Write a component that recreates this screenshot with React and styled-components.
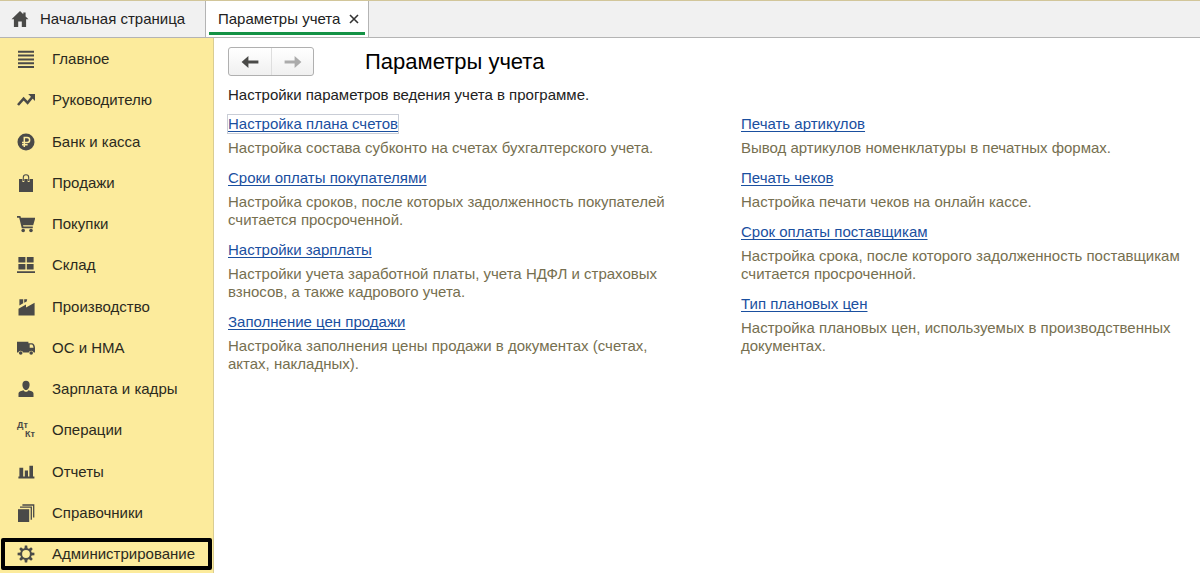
import styled, {createGlobalStyle} from "styled-components";

const GlobalStyle = createGlobalStyle`
    * {
        box-sizing: border-box;
    }

    body {
        margin: 0;
        background: #FFF;
        font-family: "Liberation Sans", Arial, sans-serif;
        font-size: 15px;
        line-height: 18px;
        color: #222;
    }
`;

const HomeIcon = () => (
    <Icon viewBox="0 0 18 18">
        <path d="M9 1 0.5 9.3h2.4V17h4.3v-5.4h3.6V17h4.3V9.3h2.4L14.6 6.6V2.5h-2.3v1.8z"/>
    </Icon>
);

const MenuIcon = () => (
    <Icon viewBox="0 0 18 18">
        <path d="M1 .8h16v2H1zM1 4.6h16v2H1zM1 8.4h16v2H1zM1 12.2h16v2H1zM1 16h16v2H1z"/>
    </Icon>
);

const TrendIcon = () => (
    <Icon viewBox="0 0 18 18">
        <path d="M1 14 6.6 7.6l4 4.2L15.4 6" fill="none" stroke="currentColor" strokeWidth="2.6"/>
        <path d="M11.2 3H18v7z"/>
    </Icon>
);

const RubleIcon = () => (
    <Icon viewBox="0 0 18 18">
        <circle cx="9" cy="9" r="8.5"/>
        <path
            d="M7.3 14V4.6h2.9a2.4 2.4 0 0 1 0 4.9H5M5 11.8h5.6"
            fill="none" stroke="#FCEB9C" strokeWidth="1.5"
        />
    </Icon>
);

const BagIcon = () => (
    <Icon viewBox="0 0 18 18">
        <path d="M2 5h3.4v3h1.9V5h3.4v3h1.9V5H16v13H2z"/>
        <path d="M6.3 7V3.4a2.7 2.7 0 0 1 5.4 0V7" fill="none" stroke="currentColor" strokeWidth="1.1"/>
    </Icon>
);

const CartIcon = () => (
    <Icon viewBox="0 0 18 18">
        <path d="M0 1h3.4l.5 1.7H18.400l-2.2 7.5H6l.4 1.4h9.400v1.6H4.8L2.2 2.7H0z"/>
        <circle cx="6.2" cy="15.500" r="1.800"/>
        <circle cx="14" cy="15.500" r="1.800"/>
    </Icon>
);

const WarehouseIcon = () => (
    <Icon viewBox="0 0 18 18">
        <path d="M1.4 1h7v5.6h-7zM9.8 1h6.8v5.6H9.8zM1.4 8h7v5.5h-7zM9.8 8h6.8v5.5H9.8zM0 15.2h18V17H0z"/>
    </Icon>
);

const FactoryIcon = () => (
    <Icon viewBox="0 0 18 18">
        <path d="M1.5 17.400V10.8L9 6.400v3.100L17.6 4.800v12.600z"/>
        <path d="M2.400 1.200h3.800v4L2.400 7.400zM7.200 1.200h3l-.5 2.400L7.200 4.800z"/>
    </Icon>
);

const TruckIcon = () => (
    <Icon viewBox="0 0 18 18">
        <path
            fillRule="evenodd"
            d="M0 2.8h11.4v1.4h3.8c1.6 0 2.8 2.6 2.8 4.6v4.8h-1.3a2.6 2.6 0 0 0-5 0H6.2a2.6 2.6 0 0 0-5 0H0zM12.7 5.6v3.1h3.8c-.2-1.7-.8-3.1-1.7-3.1z"
        />
        <circle cx="3.7" cy="14" r="1.8"/>
        <circle cx="14.2" cy="14" r="1.8"/>
    </Icon>
);

const PersonIcon = () => (
    <Icon viewBox="0 0 18 18">
        <path d="M9 .8c2.300 0 3.600 1.600 3.600 3.900S11.200 10 9 10 5.400 7 5.400 4.700 6.700.8 9 .8z"/>
        <path d="M6.600 10.200C7.200 11.200 8 11.700 9 11.700s1.800-.5 2.400-1.500l3.200 1c1.300.4 1.900 1.300 1.900 2.600V17h-15v-3.200c0-1.300.6-2.200 1.900-2.600z"/>
    </Icon>
);

const ChartIcon = () => (
    <Icon viewBox="0 0 18 18">
        <path d="M2.4 4.8h3.8v9.2H2.4zM7.8 7.6h3.2v6.4H7.8zM12.4 2.8H16v11.2h-3.6zM1.4 13.6h16v1.8h-16z"/>
    </Icon>
);

const BooksIcon = () => (
    <Icon viewBox="0 0 18 18">
        <path d="M1 5.2h11.2V18H1z"/>
        <path d="M3 3.2h11.3v12.6M5.4 1h11.3v12.6" fill="none" stroke="currentColor" strokeWidth="1.3"/>
    </Icon>
);

const teeth = [0, 45, 90, 135, 180, 225, 270, 315];

const GearIcon = () => (
    <Icon viewBox="0 0 18 18">
        <circle cx="9" cy="9" r="4.9" fill="none" stroke="currentColor" strokeWidth="2"/>
        {teeth.map((angle) => (
            <path key={angle} d="M7.8.6h2.4l.4 3.4H7.4z" transform={`rotate(${angle} 9 9)`}/>
        ))}
    </Icon>
);

const DebitCreditIcon = () => (
    <DebitCredit aria-hidden="true">
        <span>Дт</span>
        <Credit>Кт</Credit>
    </DebitCredit>
);

const ArrowIcon = ({flipped}) => (
    <Icon viewBox="0 0 18 18">
        <path
            d="M.6 9 7.4 3v4.5h10v3h-10V15z"
            transform={flipped ? "rotate(180 9 9)" : undefined}
        />
    </Icon>
);

const CloseIcon = () => (
    <CloseGlyph viewBox="0 0 10 10">
        <path d="M1 1l8 8M9 1 1 9" fill="none" stroke="currentColor" strokeWidth="1.6"/>
    </CloseGlyph>
);

const sections = [
    {title: "Главное", icon: MenuIcon},
    {title: "Руководителю", icon: TrendIcon},
    {title: "Банк и касса", icon: RubleIcon},
    {title: "Продажи", icon: BagIcon},
    {title: "Покупки", icon: CartIcon},
    {title: "Склад", icon: WarehouseIcon},
    {title: "Производство", icon: FactoryIcon},
    {title: "ОС и НМА", icon: TruckIcon},
    {title: "Зарплата и кадры", icon: PersonIcon},
    {title: "Операции", icon: DebitCreditIcon},
    {title: "Отчеты", icon: ChartIcon},
    {title: "Справочники", icon: BooksIcon},
    {title: "Администрирование", icon: GearIcon, selected: true},
];

const columns = [
    [
        {
            title: "Настройка плана счетов",
            text: "Настройка состава субконто на счетах бухгалтерского учета.",
            focused: true,
        },
        {
            title: "Сроки оплаты покупателями",
            text: "Настройка сроков, после которых задолженность покупателей считается просроченной.",
        },
        {
            title: "Настройки зарплаты",
            text: "Настройки учета заработной платы, учета НДФЛ и страховых взносов, а также кадрового учета.",
        },
        {
            title: "Заполнение цен продажи",
            text: "Настройка заполнения цены продажи в документах (счетах, актах, накладных).",
        },
    ],
    [
        {
            title: "Печать артикулов",
            text: "Вывод артикулов номенклатуры в печатных формах.",
        },
        {
            title: "Печать чеков",
            text: "Настройка печати чеков на онлайн кассе.",
        },
        {
            title: "Срок оплаты поставщикам",
            text: "Настройка срока, после которого задолженность поставщикам считается просроченной.",
        },
        {
            title: "Тип плановых цен",
            text: "Настройка плановых цен, используемых в производственных документах.",
        },
    ],
];

const App = () => {
    return (
        <Page>
            <GlobalStyle/>
            <TabBar>
                <HomeTab type="button">
                    <HomeIcon/>
                    Начальная страница
                </HomeTab>
                <ActiveTab>
                    <TabTitle type="button">Параметры учета</TabTitle>
                    <CloseButton type="button" aria-label="Закрыть">
                        <CloseIcon/>
                    </CloseButton>
                </ActiveTab>
            </TabBar>
            <Body>
                <Sidebar>
                    {sections.map(({title, icon: SectionIcon, selected}) => (
                        <SectionLink href="#" key={title} $selected={selected}>
                            <SectionIcon/>
                            {title}
                        </SectionLink>
                    ))}
                </Sidebar>
                <Content>
                    <Toolbar>
                        <History>
                            <HistoryButton type="button" aria-label="Назад">
                                <ArrowIcon/>
                            </HistoryButton>
                            <HistoryButton type="button" aria-label="Вперед" disabled>
                                <ArrowIcon flipped/>
                            </HistoryButton>
                        </History>
                        <Title>Параметры учета</Title>
                    </Toolbar>
                    <Intro>Настройки параметров ведения учета в программе.</Intro>
                    <Columns>
                        {columns.map((items, index) => (
                            <Column key={index}>
                                {items.map(({title, text, focused}) => (
                                    <Setting key={title}>
                                        <SettingLink href="#" $focused={focused}>{title}</SettingLink>
                                        <SettingText>{text}</SettingText>
                                    </Setting>
                                ))}
                            </Column>
                        ))}
                    </Columns>
                </Content>
            </Body>
        </Page>
    )
};

export default App;

const Page = styled.div`
    min-height: 100vh;
    display: flex;
    flex-direction: column;
`;

const Icon = styled.svg`
    width: 18px;
    height: 18px;
    flex: none;
    fill: currentColor;
    color: #4A4A48;
`;

const CloseGlyph = styled.svg`
    display: block;
    width: 10px;
    height: 10px;
`;

const TabBar = styled.header`
    height: 38px;
    display: flex;
    background: #F1F1F1;
    border-top: 1px solid #D2C69A;
    border-bottom: 1px solid #B4B4B4;
`;

const PlainButton = styled.button`
    border: none;
    background: none;
    padding: 0;
    font: inherit;
    color: inherit;
`;

const HomeTab = styled(PlainButton)`
    width: 205px;
    display: flex;
    align-items: center;
    gap: 11px;
    padding-left: 11px;
    white-space: nowrap;
`;

const ActiveTab = styled.div`
    display: flex;
    align-items: center;
    gap: 9px;
    padding: 0 9px;
    background: linear-gradient(#149245, #149245) center bottom 2px / calc(100% - 6px) 3px no-repeat #FFF;
    border-left: 1px solid #B4B4B4;
    border-right: 1px solid #B4B4B4;
`;

const TabTitle = styled(PlainButton)`
    padding-left: 3px;
    white-space: nowrap;
`;

const CloseButton = styled(PlainButton)`
    color: #333;
`;

const Body = styled.div`
    flex: 1;
    display: flex;
`;

const Sidebar = styled.nav`
    width: 214px;
    flex: none;
    display: flex;
    flex-direction: column;
    justify-content: space-between;
    padding: 5px 1px 3px;
    background: #FCEB9C;
    border-right: 1px solid #DACD92;
`;

const SectionLink = styled.a`
    height: 32px;
    display: flex;
    align-items: center;
    gap: 17px;
    padding-left: 12px;
    border: 4px solid ${({$selected}) => $selected ? "#000" : "transparent"};
    border-radius: 2px;
    color: #2B2A1E;
    text-decoration: none;
    white-space: nowrap;
`;

const DebitCredit = styled.span`
    width: 18px;
    flex: none;
    display: flex;
    flex-direction: column;
    color: #4A4A48;
    font-size: 9px;
    font-weight: 700;
    line-height: 9px;
`;

const Credit = styled.span`
    align-self: flex-end;
`;

const Content = styled.main`
    flex: 1;
    padding: 9px 4px 20px 14px;
`;

const Toolbar = styled.div`
    display: flex;
    align-items: center;
    gap: 51px;
`;

const History = styled.div`
    display: flex;
    border: 1px solid #B0B0B0;
    border-radius: 3px;
    background: linear-gradient(#FFF, #F0F0F0);
`;

const HistoryButton = styled(PlainButton)`
    width: 42px;
    height: 27px;
    display: flex;
    align-items: center;
    justify-content: center;

    & + & {
        border-left: 1px solid #DEDEDE;
    }

    &:disabled ${Icon} {
        color: #ABABAB;
    }
`;

const Title = styled.h1`
    margin: 0;
    color: #000;
    font-size: 22px;
    line-height: 24px;
    font-weight: 400;
`;

const Intro = styled.p`
    margin: 10px 0 11px;
`;

const Columns = styled.div`
    display: grid;
    grid-template-columns: 1fr 1fr;
    gap: 58px;
`;

const Column = styled.div`
    display: flex;
    flex-direction: column;
    gap: 12px;
`;

const Setting = styled.section`
    display: flex;
    flex-direction: column;
    align-items: flex-start;
    gap: 6px;
`;

const SettingLink = styled.a`
    color: #1A4F9F;
    text-underline-offset: 2px;
    text-decoration-skip-ink: none;
    outline: ${({$focused}) => $focused ? "1px solid #C9CDD6" : "none"};
`;

const SettingText = styled.p`
    margin: 0;
    color: #766F50;
`;
